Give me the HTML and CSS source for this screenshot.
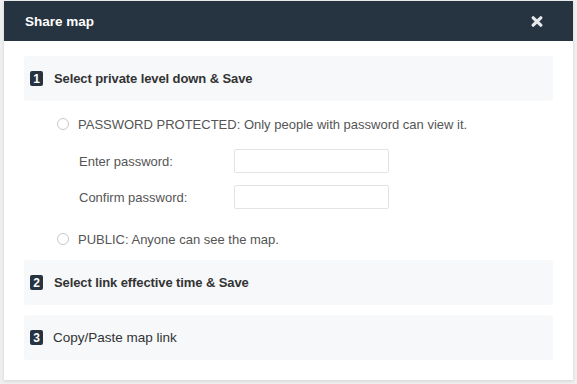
FILE: index.html
```html
<!DOCTYPE html>
<html>
<head>
<meta charset="utf-8">
<link rel="stylesheet" href="styles.css">
</head>
<body>
<div class="modal">
  <div class="modal-header">
    <span class="modal-title">Share map</span>
    <svg class="close" width="12" height="11" viewBox="0 0 12 11"><path d="M2.2 1.8 L9.8 9.2 M9.8 1.8 L2.2 9.2" stroke="#e6e9ec" stroke-width="3.2" stroke-linecap="round"/></svg>
  </div>
  <div class="modal-body">
    <div class="step">
      <span class="badge">1</span>
      <span class="step-title bold">Select private level down &amp; Save</span>
    </div>
    <div class="options">
      <label class="option"><span class="radio"></span>PASSWORD PROTECTED: Only people with password can view it.</label>
      <div class="field"><span class="field-label">Enter password:</span><span class="input"></span></div>
      <div class="field second"><span class="field-label">Confirm password:</span><span class="input"></span></div>
      <label class="option public"><span class="radio"></span>PUBLIC: Anyone can see the map.</label>
    </div>
    <div class="step">
      <span class="badge">2</span>
      <span class="step-title bold">Select link effective time &amp; Save</span>
    </div>
    <div class="step last">
      <span class="badge">3</span>
      <span class="step-title plain">Copy/Paste map link</span>
    </div>
  </div>
</div>
</body>
</html>
```
FILE: styles.css
```css
html, body { margin: 0; padding: 0; }
body {
  background: #efefef;
  font-family: "Liberation Sans", Arial, sans-serif;
  width: 577px;
  height: 384px;
  overflow: hidden;
}
.modal {
  margin: 1px 0 0 4px;
  width: 569px;
  height: 379px;
  background: #fff;
  box-shadow: 0 1px 3px rgba(0,0,0,0.12);
}
.modal-header {
  height: 40px;
  background: #263340;
  display: flex;
  align-items: center;
  justify-content: space-between;
  padding: 0 30px 0 21px;
}
.modal-title {
  color: #fff;
  font-weight: bold;
  font-size: 13.5px;
}
.close { display: block; margin-top: 1px; }
.modal-body {
  padding: 15px 20px 0 20px;
}
.step {
  background: #f6f8fa;
  height: 45px;
  border-radius: 3px;
  display: flex;
  align-items: center;
  padding-left: 6px;
  margin-bottom: 10px;
}
.badge {
  width: 13px;
  height: 15px;
  border-radius: 2px;
  background: #263340;
  color: #fff;
  font-weight: bold;
  font-size: 12px;
  display: flex;
  align-items: center;
  justify-content: center;
  margin-right: 11px;
}
.step-title {
  font-size: 13px;
  color: #333;
}
.step-title.bold { font-weight: bold; letter-spacing: -0.1px; }
.step-title.plain { font-size: 13.5px; margin-left: -1px; }
.options {
  padding: 3px 0 11px 33px;
  font-size: 13px;
  color: #555;
}
.option {
  display: flex;
  align-items: center;
  height: 20px;
}
.radio {
  width: 12px;
  height: 12px;
  border: 1px solid #c8c8c8;
  border-radius: 50%;
  margin-right: 9px;
  box-sizing: border-box;
}
.field {
  display: flex;
  align-items: center;
  padding-left: 22px;
  margin-top: 15px;
}
.field.second { margin-top: 12px; }
.field-label { width: 155px; }
.input {
  width: 155px;
  height: 24px;
  border: 1px solid #e3e3e3;
  border-radius: 2px;
  box-sizing: border-box;
  background: #fff;
}
.option.public { margin-top: 20px; }
```
